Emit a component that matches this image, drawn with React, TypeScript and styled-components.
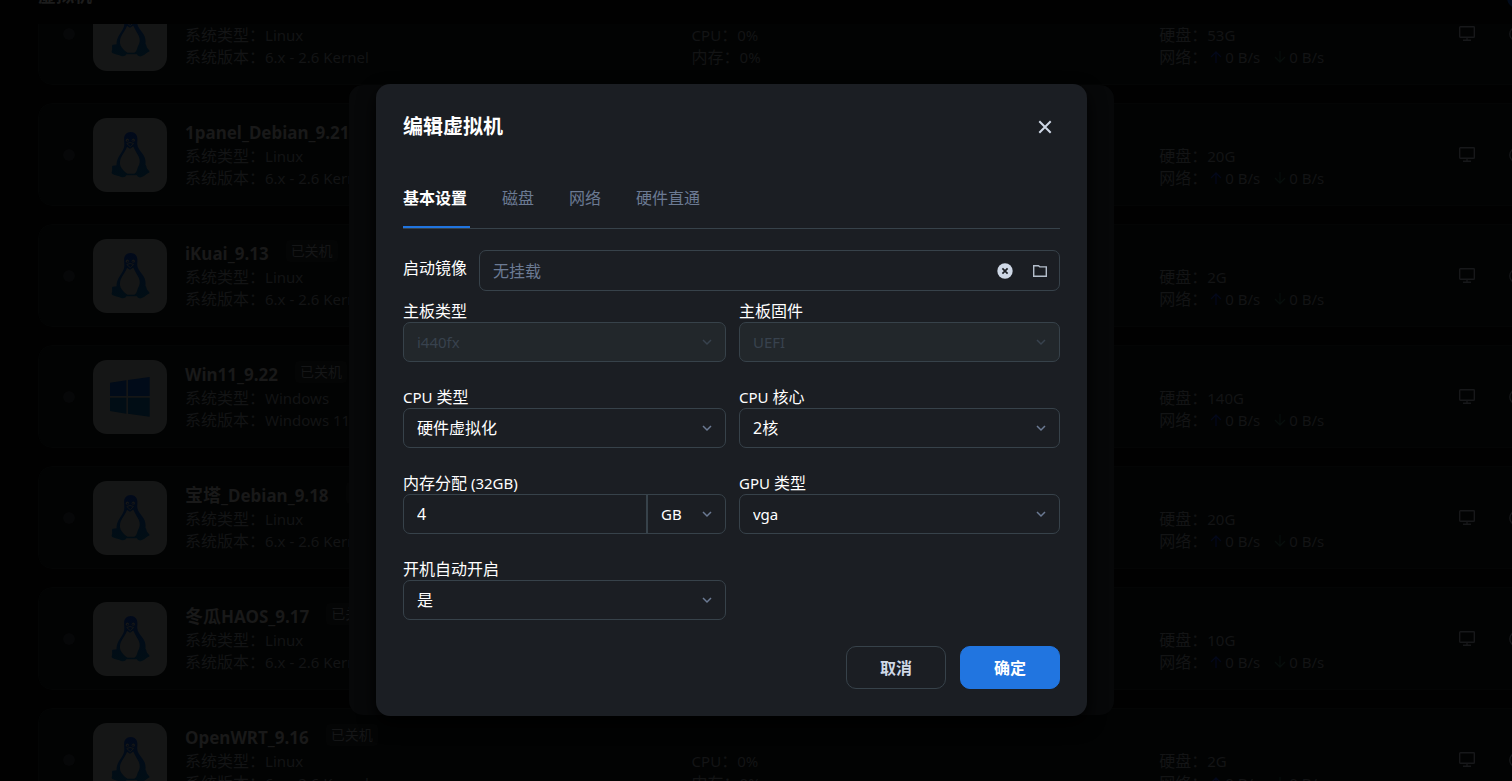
import React, { useState } from 'react';
import styled, { createGlobalStyle, css } from 'styled-components';

const GlobalStyle = createGlobalStyle`
  * { box-sizing: border-box; }
  html, body, #root { height: 100%; }
  body {
    margin: 0;
    background: #010101;
    color: #fff;
    font-family: "Noto Sans", "Noto Sans CJK SC", sans-serif;
    font-size: 16px;
    overflow: hidden;
  }
  button, input, select { font: inherit; color: inherit; }
  button { cursor: pointer; }
`;

/* ---------- shared text ---------- */

const Latin = styled.span<{ $size: number }>`
  font-size: ${(p) => p.$size}px;
`;

/* Latin runs are set one pixel smaller than the Chinese around them. */
function Mixed({ text, size = 15 }: { text: string; size?: number }) {
  return (
    <>
      {text.split(/([\x20-\x7e]+)/).filter(Boolean).map((part, i) =>
        /^[\x20-\x7e]+$/.test(part) ? <Latin key={i} $size={size}>{part}</Latin> : part
      )}
    </>
  );
}

/* ---------- machine list ---------- */

const Page = styled.main`
  height: 100vh;
  display: flex;
  flex-direction: column;
  padding-left: 38px;
  overflow: hidden;
`;

const PageHeader = styled.header`
  flex: none;
  display: flex;
  align-items: flex-end;
  justify-content: space-between;
  height: 24px;
  margin-right: -60px;
  padding-bottom: 16px;
`;

const PageTitle = styled.h1`
  margin: 0;
  font-size: 18px;
  line-height: 26px;
  color: #1c1c1c;
`;

const CreateButton = styled.button`
  width: 65px;
  height: 40px;
  border: 0;
  border-radius: 10px;
  background: #020b1a;
`;

const ListViewport = styled.div`
  flex: 1;
  min-height: 0;
  overflow: hidden;
`;

const List = styled.ul`
  display: flex;
  flex-direction: column;
  gap: 18px;
  margin: -42px -60px 0 0;
  padding: 0;
  list-style: none;
`;

const Card = styled.li`
  flex: none;
  height: 103px;
  display: grid;
  grid-template-columns: 54px 92px 507fr 468fr 300fr 50px 62px;
  align-items: center;
  border: 1px solid #040505;
  border-radius: 14px;
  background: #020303;
`;

const StatusDot = styled.span`
  justify-self: center;
  width: 12px;
  height: 12px;
  margin-left: 6px;
  border-radius: 50%;
  background: #060708;
`;

const Tile = styled.div`
  width: 74px;
  height: 74px;
  display: grid;
  place-items: center;
  border-radius: 14px;
  background: #151616;
`;

const Info = styled.div`
  min-width: 0;
  height: 72px;
  display: flex;
  flex-direction: column;
  justify-content: flex-end;
  padding-bottom: 2px;
  white-space: nowrap;
`;

const NameRow = styled.div`
  display: flex;
  align-items: flex-start;
  gap: 17px;
  height: 26px;
`;

const Name = styled.h2`
  margin: 0;
  font-size: 18px;
  line-height: 26px;
  font-weight: 700;
  color: #191919;
`;

const StateBadge = styled.span`
  padding: 0 5px;
  border-radius: 4px;
  background: #040505;
  font-size: 14px;
  line-height: 22px;
  color: #151617;
`;

const Meta = styled.div`
  display: flex;
  align-items: center;
  line-height: 22px;
  height: 22px;
  color: #131415;
`;

const Rate = styled.span`
  display: inline-flex;
  align-items: center;
  gap: 3px;
  margin: 0 11px 0 3px;
  font-size: 15px;
`;

const IconButton = styled.button`
  display: grid;
  place-items: center;
  padding: 0;
  border: 0;
  background: none;
  color: inherit;
`;

const CardAction = styled(IconButton)`
  justify-self: start;
  color: #17181a;
`;

function Tux() {
  return (
    <svg width="39" height="46" viewBox="0 0 117 140" aria-hidden="true">
      <defs>
        <linearGradient id="tux" x1="0" y1="0" x2="0" y2="1">
          <stop offset="0" stopColor="#01091a" />
          <stop offset="1" stopColor="#010e15" />
        </linearGradient>
      </defs>
      <path
        fill="url(#tux)"
        d="M59 0C46 0 39 9 39 20C39 32 41 39 38 49C34 62 22 72 18 86C16 92 16 97 16 101L4 103C0 105 5 113 1 123C0 128 10 130 22 134C34 139 41 140 46 132L78 132C81 139 90 140 98 135C103 131 110 126 116 123C118 120 112 116 109 112C107 108 107 103 104 100C106 84 101 74 95 66C86 54 80 48 79 36C79 28 81 20 78 12C75 4 68 0 59 0Z"
      />
      <path
        fill="#151616"
        d="M48 45C44 58 33 68 28 82C25 92 26 104 32 111C38 118 44 126 50 127L70 127C77 123 78 117 81 107C88 98 88 86 84 76C79 65 72 56 67 44L57 51Z"
      />
      <circle cx="49" cy="25" r="5" fill="#151616" />
      <circle cx="67" cy="25" r="5" fill="#151616" />
      <circle cx="50" cy="26" r="2" fill="#01091a" />
      <circle cx="66" cy="26" r="2" fill="#01091a" />
      <path fill="none" stroke="#151616" strokeWidth="3" d="M47 35L57 32L68 35L58 45Z" />
    </svg>
  );
}

function WindowsLogo() {
  return (
    <svg width="40" height="40" viewBox="0 0 120 120" aria-hidden="true">
      <path fill="#010b19" d="M0 17L49 10V57H0ZM54 9L119 0V57H54Z" />
      <path fill="#010d15" d="M0 62H49V110L0 102ZM54 62H119V119L54 110Z" />
    </svg>
  );
}

function MonitorIcon() {
  return (
    <svg width="16" height="16" viewBox="0 0 16 16" fill="none" stroke="currentColor" aria-hidden="true">
      <rect x="0.7" y="0.7" width="14.6" height="10.6" rx="0.6" strokeWidth="1.4" />
      <path d="M8 11.5V14M4 14.2H12" strokeWidth="1.4" />
    </svg>
  );
}

function PowerIcon() {
  return (
    <svg width="16" height="16" viewBox="0 0 16 16" fill="none" stroke="currentColor" strokeWidth="1.4" aria-hidden="true">
      <circle cx="8" cy="8" r="7.2" />
      <path d="M8 4V8" />
    </svg>
  );
}

function Arrow({ down }: { down?: boolean }) {
  return (
    <svg width="12" height="14" viewBox="0 0 12 14" fill="none" stroke={down ? '#070e0c' : '#03081a'} strokeWidth="1.4" aria-hidden="true">
      <path d={down ? 'M6 1V12M1 7L6 12L11 7' : 'M6 13V2M1 7L6 2L11 7'} />
    </svg>
  );
}

type Machine = { name: string; os: string; version: string; disk: string };

const machines: Machine[] = [
  { name: 'Debian_9.20', os: 'Linux', version: '6.x - 2.6 Kernel', disk: '53G' },
  { name: '1panel_Debian_9.21', os: 'Linux', version: '6.x - 2.6 Kernel', disk: '20G' },
  { name: 'iKuai_9.13', os: 'Linux', version: '6.x - 2.6 Kernel', disk: '2G' },
  { name: 'Win11_9.22', os: 'Windows', version: 'Windows 11', disk: '140G' },
  { name: '宝塔_Debian_9.18', os: 'Linux', version: '6.x - 2.6 Kernel', disk: '20G' },
  { name: '冬瓜HAOS_9.17', os: 'Linux', version: '6.x - 2.6 Kernel', disk: '10G' },
  { name: 'OpenWRT_9.16', os: 'Linux', version: '6.x - 2.6 Kernel', disk: '2G' },
];

function MachineCard({ name, os, version, disk }: Machine) {
  return (
    <Card>
      <StatusDot />
      <Tile>{os === 'Windows' ? <WindowsLogo /> : <Tux />}</Tile>
      <Info>
        <NameRow>
          <Name><Mixed text={name} size={17} /></Name>
          <StateBadge>已关机</StateBadge>
        </NameRow>
        <Meta>系统类型：<Latin $size={15}>{os}</Latin></Meta>
        <Meta>系统版本：<Latin $size={15}>{version}</Latin></Meta>
      </Info>
      <Info>
        <Meta><Mixed text="CPU：0%" /></Meta>
        <Meta><Mixed text="内存：0%" /></Meta>
      </Info>
      <Info>
        <Meta><Mixed text={`硬盘：${disk}`} /></Meta>
        <Meta>
          网络：
          <Rate><Arrow />0 B/s</Rate>
          <Rate><Arrow down />0 B/s</Rate>
        </Meta>
      </Info>
      <CardAction type="button" aria-label="控制台"><MonitorIcon /></CardAction>
      <CardAction type="button" aria-label="电源"><PowerIcon /></CardAction>
    </Card>
  );
}

/* ---------- dialog ---------- */

const Overlay = styled.div`
  position: fixed;
  inset: 0;
  display: grid;
  place-items: center;
  padding: 19px 49px 0 0;
`;

const Backing = styled.div`
  width: 765px;
  max-width: 100%;
  display: flex;
  justify-content: center;
  border-radius: 14px;
  background: #070809;
`;

const Dialog = styled.section`
  width: 711px;
  max-width: 100%;
  margin: -1px 0;
  padding: 27px;
  display: flex;
  flex-direction: column;
  border-radius: 14px;
  background: #1b1e23;
  box-shadow: 0 8px 18px #000;
`;

const DialogHeader = styled.header`
  display: flex;
  align-items: center;
  justify-content: space-between;
  height: 32px;
`;

const DialogTitle = styled.h2`
  margin: 0;
  font-size: 20px;
  line-height: 32px;
  font-weight: 700;
`;

const CloseButton = styled(IconButton)`
  width: 30px;
  height: 30px;
  color: #cfd8e6;
`;

const TabBar = styled.div`
  display: flex;
  gap: 32px;
  height: 60px;
  margin-top: 26px;
  border-bottom: 1px solid #37424a;
`;

const Tab = styled.button<{ $active: boolean }>`
  padding: 0 3px 0 0;
  border: 0;
  border-bottom: 2px solid transparent;
  background: none;
  color: #6b7a93;
  line-height: 24px;
  ${(p) => p.$active && css`
    border-bottom-color: #2175e0;
    color: #fff;
    font-weight: 700;
  `}
`;

const Form = styled.form`
  display: flex;
  flex-direction: column;
`;

const BootRow = styled.div`
  display: flex;
  align-items: center;
  gap: 12px;
  margin: 21px 0 11px;
`;

const Label = styled.label`
  display: block;
  height: 20px;
  line-height: 18px;
  white-space: nowrap;
`;

const BootLabel = styled(Label)`
  margin-bottom: 4px;
`;

const frame = css`
  border: 1px solid #37424a;
  border-radius: 7px;
`;

const BootField = styled.div`
  ${frame}
  flex: 1;
  height: 41px;
  display: flex;
  align-items: center;
  gap: 20px;
  padding: 0 12px 0 13px;
`;

const TextInput = styled.input`
  flex: 1;
  min-width: 0;
  height: 100%;
  padding: 0;
  border: 0;
  outline: 0;
  background: none;
  &::placeholder { color: #6b7a93; opacity: 1; }
`;

const Grid = styled.div`
  display: grid;
  grid-template-columns: 1fr 1fr;
  gap: 26px 13px;
`;

const SelectFrame = styled.div<{ $disabled?: boolean; $attached?: boolean }>`
  ${frame}
  height: 40px;
  display: grid;
  align-items: center;
  background: ${(p) => (p.$disabled ? '#22272b' : 'transparent')};
  color: ${(p) => (p.$disabled ? '#38424e' : '#fff')};
  ${(p) => p.$attached && css`
    width: 79px;
    height: 100%;
    border-width: 0 0 0 2px;
    border-radius: 0;
  `}
  & > * { grid-area: 1 / 1; }
  & > svg {
    justify-self: end;
    margin-right: 13px;
    color: ${(p) => (p.$disabled ? '#38424e' : '#6b7a93')};
    pointer-events: none;
  }
`;

const NativeSelect = styled.select<{ $latin?: boolean }>`
  appearance: none;
  width: 100%;
  height: 100%;
  padding: 0 32px 0 13px;
  border: 0;
  outline: 0;
  background: none;
  font-size: ${(p) => (p.$latin ? 15 : 16)}px;
  opacity: 1;
  option { background: #1b1e23; }
`;

const MemoryFrame = styled.div`
  ${frame}
  display: flex;
  height: 40px;
  padding-left: 13px;
`;

const Actions = styled.footer`
  display: flex;
  justify-content: flex-end;
  gap: 14px;
  margin-top: 26px;
`;

const ActionButton = styled.button<{ $primary?: boolean }>`
  height: 43px;
  padding: 0 33px 2px;
  border: 1px solid ${(p) => (p.$primary ? '#2175e0' : '#37424a')};
  border-radius: 10px;
  background: ${(p) => (p.$primary ? '#2175e0' : 'transparent')};
  color: ${(p) => (p.$primary ? '#fff' : '#cfd8e6')};
  font-weight: 700;
`;

function Chevron() {
  return (
    <svg width="10" height="10" viewBox="0 0 10 10" fill="none" stroke="currentColor" strokeWidth="1.5" aria-hidden="true">
      <path d="M1 3L5 7L9 3" />
    </svg>
  );
}

type SelectProps = {
  id: string;
  value: string;
  label?: string;
  disabled?: boolean;
  attached?: boolean;
};

function Select({ id, value, label, disabled, attached }: SelectProps) {
  return (
    <SelectFrame $disabled={disabled} $attached={attached}>
      <NativeSelect id={id} aria-label={label} disabled={disabled} $latin={/^[\x20-\x7e]+$/.test(value)}>
        <option>{value}</option>
      </NativeSelect>
      <Chevron />
    </SelectFrame>
  );
}

function Field({ id, label, children }: { id: string; label: string; children: React.ReactNode }) {
  return (
    <div>
      <Label htmlFor={id}><Mixed text={label} /></Label>
      {children}
    </div>
  );
}

const tabs = ['基本设置', '磁盘', '网络', '硬件直通'];

function EditDialog() {
  const [active, setActive] = useState(0);
  return (
    <Overlay>
      <Backing>
        <Dialog role="dialog" aria-modal="true" aria-labelledby="dialog-title">
          <DialogHeader>
            <DialogTitle id="dialog-title">编辑虚拟机</DialogTitle>
            <CloseButton type="button" aria-label="关闭">
              <svg width="14" height="14" viewBox="0 0 14 14" stroke="currentColor" strokeWidth="2" aria-hidden="true">
                <path d="M1.3 1.3L12.7 12.7M12.7 1.3L1.3 12.7" />
              </svg>
            </CloseButton>
          </DialogHeader>
          <TabBar role="tablist">
            {tabs.map((tab, i) => (
              <Tab key={tab} type="button" role="tab" aria-selected={i === active} $active={i === active} onClick={() => setActive(i)}>
                {tab}
              </Tab>
            ))}
          </TabBar>
          <Form onSubmit={(e) => e.preventDefault()}>
            <BootRow>
              <BootLabel htmlFor="boot">启动镜像</BootLabel>
              <BootField>
                <TextInput id="boot" placeholder="无挂载" />
                <IconButton type="button" aria-label="清除">
                  <svg width="16" height="16" viewBox="0 0 16 16" aria-hidden="true">
                    <circle cx="8" cy="8" r="7.7" fill="#cfd8e6" />
                    <path d="M5.4 5.4L10.6 10.6M10.6 5.4L5.4 10.6" stroke="#1b1e23" strokeWidth="1.7" />
                  </svg>
                </IconButton>
                <IconButton type="button" aria-label="浏览">
                  <svg width="14" height="12" viewBox="0 0 14 12" fill="none" stroke="#b4becb" strokeWidth="1.4" aria-hidden="true">
                    <path d="M0.7 0.7H5.4L6.8 1.9H13.3V11.3H0.7Z" />
                  </svg>
                </IconButton>
              </BootField>
            </BootRow>
            <Grid>
              <Field id="board" label="主板类型"><Select id="board" value="i440fx" disabled /></Field>
              <Field id="firmware" label="主板固件"><Select id="firmware" value="UEFI" disabled /></Field>
              <Field id="cpu" label="CPU 类型"><Select id="cpu" value="硬件虚拟化" /></Field>
              <Field id="cores" label="CPU 核心"><Select id="cores" value="2核" /></Field>
              <Field id="memory" label="内存分配 (32GB)">
                <MemoryFrame>
                  <TextInput id="memory" defaultValue="4" />
                  <Select id="unit" label="内存单位" value="GB" attached />
                </MemoryFrame>
              </Field>
              <Field id="gpu" label="GPU 类型"><Select id="gpu" value="vga" /></Field>
              <Field id="autostart" label="开机自动开启"><Select id="autostart" value="是" /></Field>
            </Grid>
            <Actions>
              <ActionButton type="button">取消</ActionButton>
              <ActionButton type="submit" $primary>确定</ActionButton>
            </Actions>
          </Form>
        </Dialog>
      </Backing>
    </Overlay>
  );
}

export default function App() {
  return (
    <>
      <GlobalStyle />
      <Page>
        <PageHeader>
          <PageTitle>虚拟机</PageTitle>
          <CreateButton type="button" aria-label="新建" />
        </PageHeader>
        <ListViewport>
          <List>
            {machines.map((m) => <MachineCard key={m.name} {...m} />)}
          </List>
        </ListViewport>
      </Page>
      <EditDialog />
    </>
  );
}
